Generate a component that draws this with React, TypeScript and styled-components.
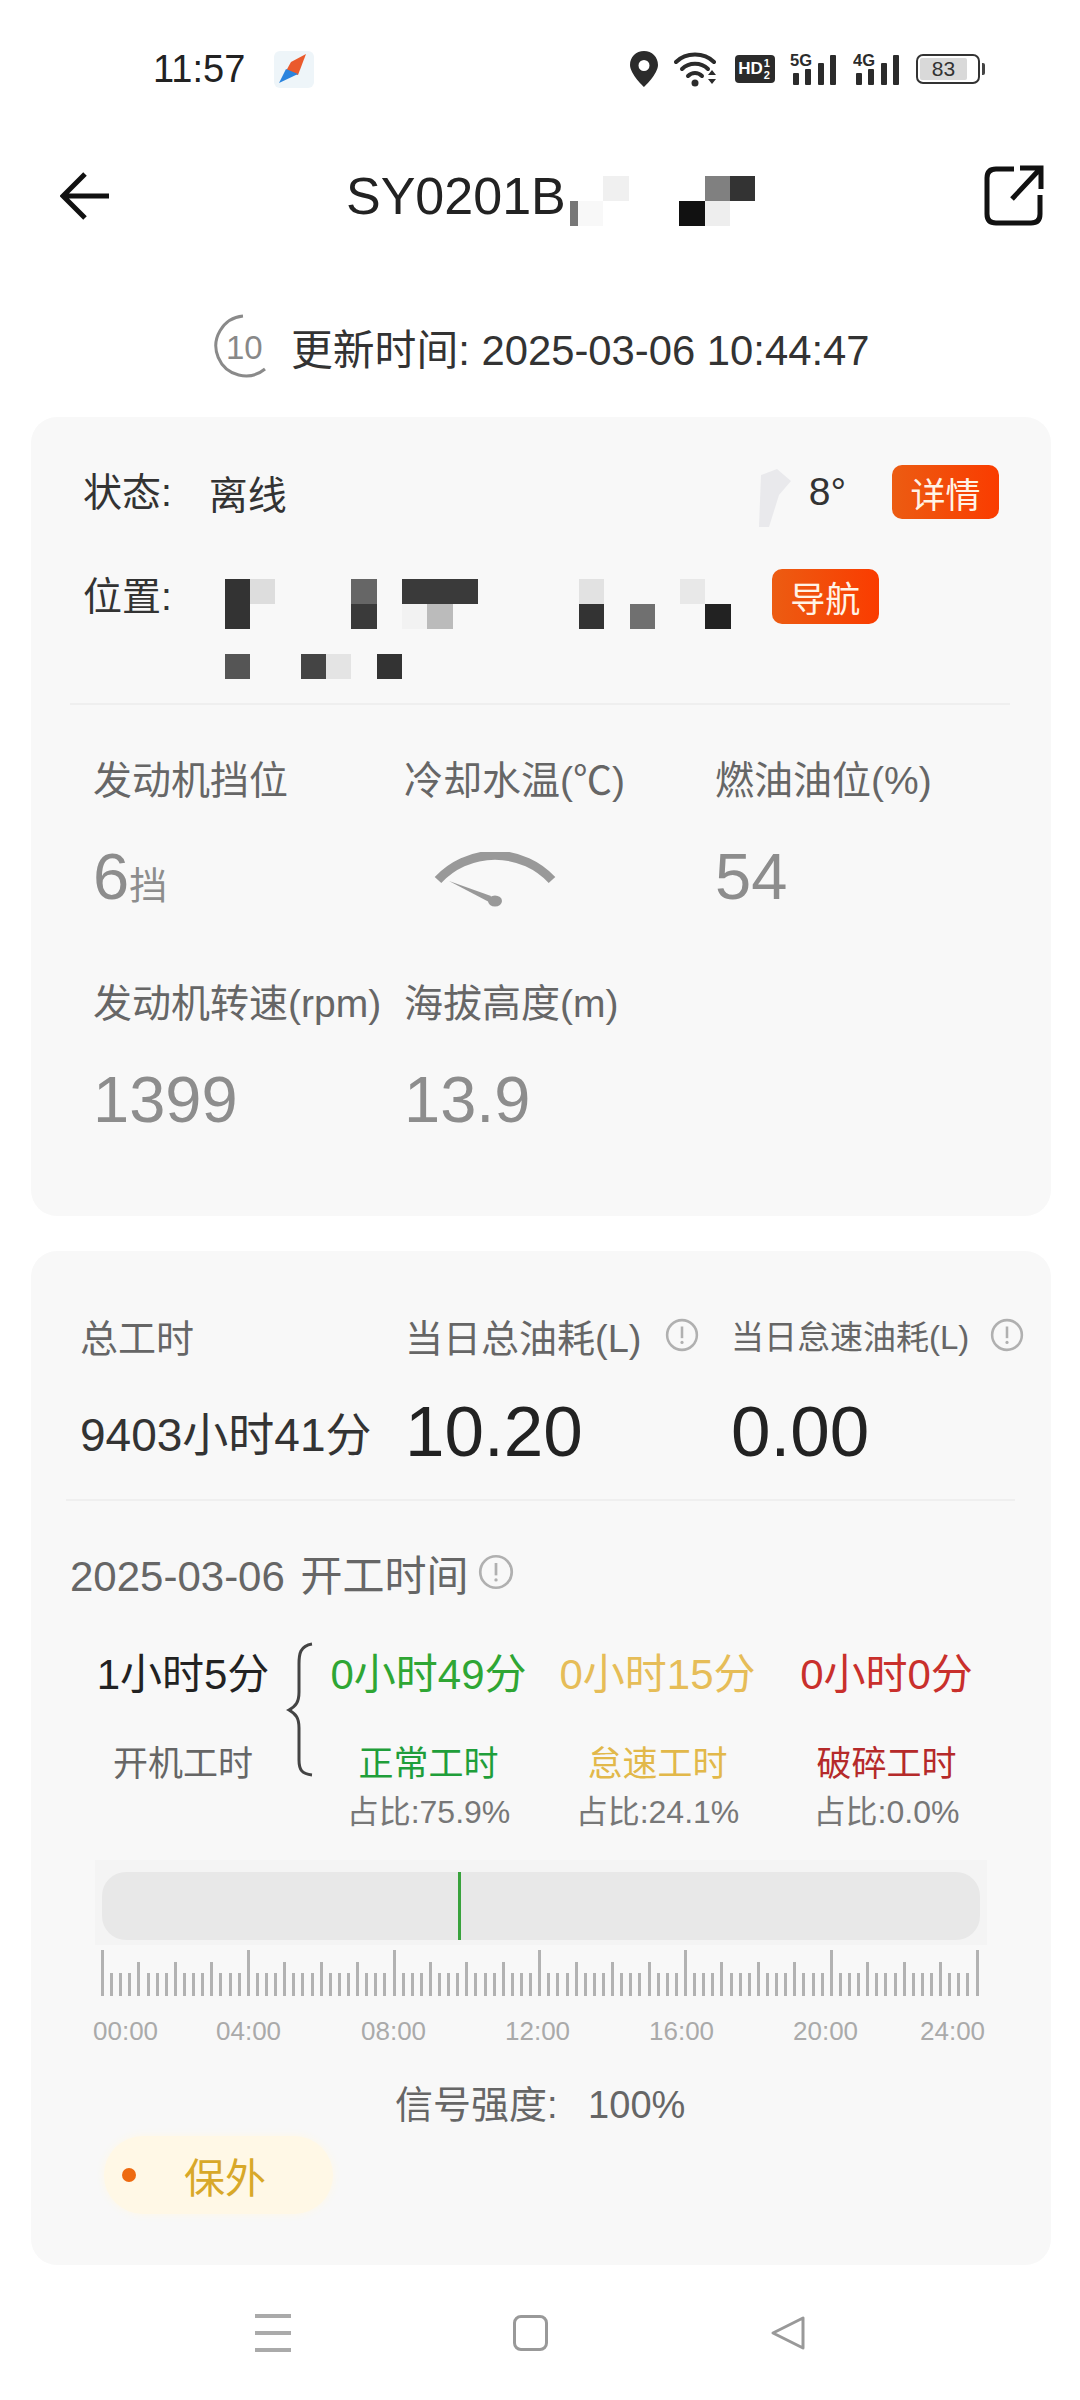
import React from 'react';
import styled, { createGlobalStyle } from 'styled-components';

const GlobalStyle = createGlobalStyle`
  html, body {
    margin: 0;
    padding: 0;
    background: #fff;
  }
  body {
    font-family: "Liberation Sans", "Noto Sans CJK SC", sans-serif;
    color: #333;
  }
`;

type CellData = [number, number, string];

const TITLE_CELLS: CellData[] = [
  [1, 2, '#777'],
  [2, 2, '#f8f8f8'],
  [3, 1, '#f0f0f0'],
  [7, 1, '#808080'],
  [8, 1, '#333'],
  [6, 2, '#111'],
  [7, 2, '#eee'],
];

const ADDRESS_CELLS: CellData[] = [
  [1, 1, '#333'],
  [2, 1, '#ddd'],
  [6, 1, '#666'],
  [8, 1, '#3a3a3a'],
  [9, 1, '#3a3a3a'],
  [10, 1, '#3a3a3a'],
  [15, 1, '#e2e2e2'],
  [19, 1, '#e8e8e8'],
  [1, 2, '#333'],
  [6, 2, '#3a3a3a'],
  [8, 2, '#f2f2f2'],
  [9, 2, '#bbb'],
  [15, 2, '#333'],
  [17, 2, '#707070'],
  [20, 2, '#222'],
  [1, 4, '#555'],
  [4, 4, '#444'],
  [5, 4, '#e4e4e4'],
  [7, 4, '#333'],
];

const TICKS = Array.from({ length: 97 }, (_, i) => i);
const HOURS = ['00:00', '04:00', '08:00', '12:00', '16:00', '20:00', '24:00'];

const STATS = [
  { value: '0小时49分', name: '正常工时', share: '占比:75.9%', color: '#2fa634', nameColor: '#1f9e3a' },
  { value: '0小时15分', name: '怠速工时', share: '占比:24.1%', color: '#e6bd58', nameColor: '#e2b84a' },
  { value: '0小时0分', name: '破碎工时', share: '占比:0.0%', color: '#c9302c', nameColor: '#b52a2a' },
];

const SignalIcon = ({ label }: { label: string }) => (
  <svg width="48" height="34" viewBox="0 0 48 34">
    <text x="0" y="14" fontSize="17" fontWeight="700" fill="#2b2b2b" fontFamily="Liberation Sans" textLength="22" lengthAdjust="spacingAndGlyphs">
      {label}
    </text>
    <rect x="3" y="21" width="6" height="12" rx="1" fill="#2b2b2b" />
    <rect x="15" y="17" width="6" height="16" rx="1" fill="#2b2b2b" />
    <rect x="28" y="11" width="6" height="22" rx="1" fill="#2b2b2b" />
    <rect x="40" y="3" width="6" height="30" rx="1" fill="#2b2b2b" />
  </svg>
);

const InfoIcon = ({ size }: { size: number }) => (
  <svg width={size} height={size} viewBox="0 0 32 32">
    <circle cx="16" cy="16" r="14" fill="none" stroke="#b0b0b0" strokeWidth="2.4" />
    <path d="M16 8v11" stroke="#b0b0b0" strokeWidth="2.4" />
    <circle cx="16" cy="23" r="1.5" fill="#b0b0b0" />
  </svg>
);

const App = () => {
  return (
    <Page>
      <GlobalStyle />
      <StatusBar>
        <Clock>11:57</Clock>
        <AppBadge viewBox="0 0 40 37" width="40" height="37">
          <rect x="0" y="0" width="40" height="37" rx="6" fill="#eef5f9" />
          <path d="M32 3 L17 11 L12 20 L24 24 Z" fill="#ea5a2c" />
          <path d="M5 32 L12 18 L24 23 Z" fill="#2a84de" />
        </AppBadge>
        <StatusIcons>
          <svg width="30" height="36" viewBox="0 0 30 36">
            <path fillRule="evenodd" d="M15 0C7 0 1 6 1 14c0 9 14 22 14 22s14-13 14-22C29 6 23 0 15 0Zm0 9a5.500 5.500 0 1 1 0 11 5.500 5.500 0 0 1 0-11Z" fill="#2b2b2b" />
          </svg>
          <svg width="46" height="36" viewBox="0 0 46 36">
            <g fill="none" stroke="#2b2b2b" strokeWidth="4" strokeLinecap="round">
              <path d="M2 11C12 1 30 1 40 11" />
              <path d="M8 18C15 11 27 11 34 18" />
              <path d="M14 25C18 21 24 21 28 25" />
            </g>
            <circle cx="21" cy="32" r="3.500" fill="#2b2b2b" />
            <path d="M34 24l4-5 4 5ZM34 28h8l-4 5Z" fill="#2b2b2b" />
          </svg>
          <HdBadge>
            HD
            <HdFraction>
              <span>1</span>
              <span>2</span>
            </HdFraction>
          </HdBadge>
          <SignalIcon label="5G" />
          <SignalIcon label="4G" />
          <Battery>
            <BatteryLevel>83</BatteryLevel>
          </Battery>
          <BatteryTip />
        </StatusIcons>
      </StatusBar>

      <Header>
        <BackIcon width="50" height="48" viewBox="0 0 50 48">
          <path d="M25 2 L3 24 L25 46 M3 24 H49" fill="none" stroke="#111" strokeWidth="5" />
        </BackIcon>
        <Title>SY0201B</Title>
        <TitleMosaic>
          {TITLE_CELLS.map(([col, row, color]) => (
            <MosaicCell key={`${col}-${row}`} $col={col} $row={row} $color={color} />
          ))}
        </TitleMosaic>
        <ShareIcon width="60" height="62" viewBox="0 0 60 62">
          <path d="M30 4 H12 Q3 4 3 13 V49 Q3 58 12 58 H47 Q56 58 56 49 V30" fill="none" stroke="#111" strokeWidth="5" />
          <path d="M28 34 L55 5 M36 3 H57 V24" fill="none" stroke="#111" strokeWidth="5" />
        </ShareIcon>
      </Header>

      <UpdateRow>
        <svg width="56" height="66" viewBox="0 0 56 66">
          <path d="M32 2 A30 30 0 1 0 54 55" fill="none" stroke="#8a8a8a" strokeWidth="3" />
          <text x="15" y="45" fontSize="33" fill="#888" fontFamily="Liberation Sans">10</text>
        </svg>
        <UpdateText>更新时间: 2025-03-06 10:44:47</UpdateText>
      </UpdateRow>

      <StatusCard>
        <StateRow>
          <RowLabel>状态:</RowLabel>
          <RowValue>离线</RowValue>
          <WeatherIcon width="34" height="60" viewBox="0 0 34 60">
            <path d="M4 8 L20 2 L34 14 L22 28 L12 60 L2 60 Z" fill="#e9e9ec" />
          </WeatherIcon>
          <Temperature>8°</Temperature>
          <ActionButton>详情</ActionButton>
        </StateRow>
        <AddressRow>
          <RowLabel>位置:</RowLabel>
          <AddressMosaic>
            {ADDRESS_CELLS.map(([col, row, color]) => (
              <MosaicCell key={`${col}-${row}`} $col={col} $row={row} $color={color} />
            ))}
          </AddressMosaic>
          <NavButton>导航</NavButton>
        </AddressRow>
        <StatusDivider />
        <MetricGrid>
          <Metric>
            <MetricLabel>发动机挡位</MetricLabel>
            <MetricValue>
              6<MetricUnit>挡</MetricUnit>
            </MetricValue>
          </Metric>
          <Metric>
            <MetricLabel>冷却水温(℃)</MetricLabel>
            <GaugeIcon width="124" height="60" viewBox="0 0 124 60">
              <path d="M5 28 A78 78 0 0 1 119 28" fill="none" stroke="#999" strokeWidth="9" />
              <path d="M16 29 L58 44 L56 50 Z" fill="#999" />
              <ellipse cx="62" cy="49" rx="7" ry="5.500" fill="#999" />
            </GaugeIcon>
          </Metric>
          <Metric>
            <MetricLabel>燃油油位(%)</MetricLabel>
            <MetricValue>54</MetricValue>
          </Metric>
          <Metric>
            <MetricLabel>发动机转速(rpm)</MetricLabel>
            <MetricValue>1399</MetricValue>
          </Metric>
          <Metric>
            <MetricLabel>海拔高度(m)</MetricLabel>
            <MetricValue>13.9</MetricValue>
          </Metric>
        </MetricGrid>
      </StatusCard>

      <WorkCard>
        <TotalsGrid>
          <TotalLabel>总工时</TotalLabel>
          <TotalLabel>
            当日总油耗(L)
            <InfoIcon size={34} />
          </TotalLabel>
          <TotalLabel $small>
            当日怠速油耗(L)
            <InfoIcon size={34} />
          </TotalLabel>
          <TotalHours>9403小时41分</TotalHours>
          <TotalValue>10.20</TotalValue>
          <TotalValue>0.00</TotalValue>
        </TotalsGrid>
        <WorkDivider />
        <DateRow>
          2025-03-06 开工时间
          <InfoIcon size={36} />
        </DateRow>
        <Breakdown>
          <StatColumn>
            <StatValue $color="#222">1小时5分</StatValue>
            <StatName $color="#666">开机工时</StatName>
          </StatColumn>
          <BraceIcon width="28" height="136" viewBox="0 0 28 136">
            <path d="M26 2 C14 4 13 12 13 22 V50 C13 60 10 64 3 68 C10 72 13 76 13 86 V118 C13 128 16 132 26 133" fill="none" stroke="#444" strokeWidth="3" />
          </BraceIcon>
          {STATS.map((stat) => (
            <StatColumn key={stat.name}>
              <StatValue $color={stat.color}>{stat.value}</StatValue>
              <StatName $color={stat.nameColor}>{stat.name}</StatName>
              <StatShare>{stat.share}</StatShare>
            </StatColumn>
          ))}
        </Breakdown>
        <TrackFrame>
          <Track>
            <TrackMark />
          </Track>
        </TrackFrame>
        <Ruler>
          {TICKS.map((i) => (
            <Tick key={i} $height={i % 16 === 0 ? 46 : i % 4 === 0 ? 34 : 23} />
          ))}
        </Ruler>
        <HourRow>
          {HOURS.map((hour) => (
            <span key={hour}>{hour}</span>
          ))}
        </HourRow>
        <SignalText>信号强度: 100%</SignalText>
        <WarrantyPill>
          <WarrantyDot />
          保外
        </WarrantyPill>
      </WorkCard>

      <NavBar>
        <MenuLines>
          <span />
          <span />
          <span />
        </MenuLines>
        <HomeSquare />
        <svg width="36" height="36" viewBox="0 0 36 36">
          <path d="M33 3 V33 L3 18 Z" fill="none" stroke="#999" strokeWidth="3" strokeLinejoin="round" />
        </svg>
      </NavBar>
    </Page>
  );
};

export default App;

const Page = styled.div`
  width: 1080px;
  height: 2400px;
  overflow: hidden;
  background: #fff;
`;

const StatusBar = styled.div`
  display: flex;
  align-items: center;
  height: 138px;
  padding-left: 153px;
`;

const Clock = styled.div`
  font-size: 38px;
  color: #222;
`;

const AppBadge = styled.svg`
  margin-left: 29px;
`;

const StatusIcons = styled.div`
  display: flex;
  align-items: center;
  margin-left: 315px;
  gap: 15px;
`;

const HdBadge = styled.div`
  display: flex;
  align-items: center;
  gap: 1px;
  width: 40px;
  height: 28px;
  background: #2b2b2b;
  border-radius: 4px;
  color: #fff;
  font-size: 17px;
  font-weight: 700;
  padding-left: 3px;
  box-sizing: border-box;
  overflow: hidden;
`;

const HdFraction = styled.div`
  display: flex;
  flex-direction: column;
  font-size: 11px;
  line-height: 12px;
`;

const Battery = styled.div`
  display: flex;
  width: 64px;
  height: 30px;
  box-sizing: border-box;
  border: 2.5px solid #333;
  border-radius: 7px;
  padding: 2px;
`;

const BatteryLevel = styled.div`
  width: 83%;
  background: #d9d9d9;
  border-radius: 2px;
  color: #333;
  font-size: 21px;
  line-height: 22px;
  text-align: center;
`;

const BatteryTip = styled.div`
  width: 3px;
  height: 12px;
  margin-left: -13px;
  background: #444;
  border-radius: 0 2px 2px 0;
`;

const Header = styled.div`
  display: flex;
  align-items: center;
  height: 116px;
  padding-left: 60px;
`;

const BackIcon = styled.svg`
  margin-right: 236px;
`;

const Title = styled.div`
  font-size: 52px;
  color: #222;
`;

const Mosaic = styled.div`
  display: grid;
  grid-auto-rows: 25px;
`;

const TitleMosaic = styled(Mosaic)`
  grid-template-columns: 8px repeat(7, 25.4px);
  margin: 10px 0 0 4px;
`;

const AddressMosaic = styled(Mosaic)`
  grid-template-columns: repeat(20, 25.3px);
  width: 506px;
  margin: 10px 0 0 53px;
  flex: none;
`;

const MosaicCell = styled.div<{ $col: number; $row: number; $color: string }>`
  grid-column: ${(p) => p.$col};
  grid-row: ${(p) => p.$row};
  background: ${(p) => p.$color};
`;

const ShareIcon = styled.svg`
  margin-left: auto;
  margin-right: 36px;
`;

const UpdateRow = styled.div`
  display: flex;
  align-items: center;
  gap: 24px;
  height: 62px;
  margin-top: 62px;
  padding-left: 211px;
`;

const UpdateText = styled.div`
  font-size: 41.8px;
  color: #333;
`;

const Card = styled.div`
  box-sizing: border-box;
  width: 1020px;
  margin-left: 31px;
  background: #f8f8f8;
  border-radius: 26px;
`;

const StatusCard = styled(Card)`
  height: 799px;
  margin-top: 39px;
  padding-top: 48px;
`;

const StateRow = styled.div`
  display: flex;
  align-items: center;
  height: 54px;
  padding: 0 52px;
`;

const RowLabel = styled.div`
  font-size: 39px;
  line-height: 55px;
  color: #333;
  flex: none;
`;

const RowValue = styled.div`
  font-size: 39px;
  margin-left: 37px;
  color: #333;
`;

const WeatherIcon = styled.svg`
  margin-left: auto;
  margin-top: 10px;
`;

const Temperature = styled.div`
  font-size: 39px;
  margin: 0 46px 0 18px;
  color: #333;
`;

const ActionButton = styled.div`
  display: flex;
  align-items: center;
  justify-content: center;
  width: 107px;
  height: 54px;
  border-radius: 10px;
  background: linear-gradient(90deg, #ec5c12, #fa3c00);
  color: #fff3e6;
  font-size: 35px;
  flex: none;
`;

const AddressRow = styled.div`
  display: flex;
  align-items: flex-start;
  height: 134px;
  margin-top: 50px;
  padding-left: 52px;
`;

const NavButton = styled(ActionButton)`
  height: 55px;
  margin-left: 41px;
`;

const StatusDivider = styled.div`
  height: 2px;
  margin: 0 41px 0 39px;
  background: #efefef;
`;

const MetricGrid = styled.div`
  display: grid;
  grid-template-columns: 311px 311px 1fr;
  grid-auto-rows: 223px;
  padding: 52px 0 0 62px;
`;

const Metric = styled.div`
  display: flex;
  flex-direction: column;
`;

const MetricLabel = styled.div`
  font-size: 39px;
  line-height: 48px;
  color: #666;
  white-space: nowrap;
`;

const MetricValue = styled.div`
  height: 80px;
  margin-top: 32px;
  font-size: 65px;
  line-height: 80px;
  color: #8d8d8d;
`;

const MetricUnit = styled.span`
  font-size: 38px;
`;

const GaugeIcon = styled.svg`
  margin: 47px 0 0 29px;
`;

const WorkCard = styled(Card)`
  height: 1014px;
  margin-top: 35px;
  padding-top: 60px;
`;

const TotalsGrid = styled.div`
  display: grid;
  grid-template-columns: 325px 326px 1fr;
  grid-template-rows: 48px 80px;
  row-gap: 36px;
  padding-left: 49px;
`;

const TotalLabel = styled.div<{ $small?: boolean }>`
  display: flex;
  align-items: center;
  gap: ${(p) => (p.$small ? '21px' : '24px')};
  font-size: ${(p) => (p.$small ? '33px' : '38px')};
  color: #666;
  white-space: nowrap;
`;

const TotalHours = styled.div`
  font-size: 46px;
  line-height: 80px;
  color: #333;
  white-space: nowrap;
`;

const TotalValue = styled.div`
  font-size: 71px;
  line-height: 74px;
  color: #222;
`;

const WorkDivider = styled.div`
  height: 2px;
  margin: 24px 36px 0 35px;
  background: #efefef;
`;

const DateRow = styled.div`
  display: flex;
  align-items: center;
  gap: 9px;
  height: 50px;
  margin-top: 46px;
  padding-left: 39px;
  font-size: 42px;
  word-spacing: 4px;
  color: #666;
`;

const Breakdown = styled.div`
  display: grid;
  grid-template-columns: 190px 36px repeat(3, 229px);
  margin-top: 46px;
  padding-left: 57px;
  height: 185px;
`;

const BraceIcon = styled.svg`
  justify-self: end;
  margin-top: -1px;
`;

const StatColumn = styled.div`
  display: flex;
  flex-direction: column;
  align-items: center;
  white-space: nowrap;
`;

const StatValue = styled.div<{ $color: string }>`
  font-size: 42px;
  line-height: 64px;
  color: ${(p) => p.$color};
`;

const StatName = styled.div<{ $color: string }>`
  margin-top: 35px;
  font-size: 35px;
  line-height: 44px;
  color: ${(p) => p.$color};
`;

const StatShare = styled.div`
  margin-top: 8px;
  font-size: 32px;
  line-height: 36px;
  color: #777;
`;

const TrackFrame = styled.div`
  box-sizing: border-box;
  width: 892px;
  height: 85px;
  margin: 32px 0 0 64px;
  padding: 12px 7px 5px;
  background: #f4f4f4;
`;

const Track = styled.div`
  position: relative;
  height: 68px;
  border-radius: 24px;
  background: #e8e8e8;
`;

const TrackMark = styled.div`
  position: absolute;
  left: 356px;
  top: 0;
  bottom: 0;
  width: 3px;
  background: #38a23c;
`;

const Ruler = styled.div`
  display: flex;
  align-items: flex-end;
  justify-content: space-between;
  width: 878px;
  height: 46px;
  margin: 5px 0 0 70px;
`;

const Tick = styled.div<{ $height: number }>`
  width: 3px;
  height: ${(p) => p.$height}px;
  background: #b2b2b2;
`;

const HourRow = styled.div`
  display: grid;
  grid-template-columns: 123px 145px 144px 144px 144px 127px auto;
  margin: 20px 0 0 62px;
  font-size: 26px;
  line-height: 30px;
  color: #aaa;
`;

const SignalText = styled.div`
  height: 44px;
  margin-top: 37px;
  padding-left: 364px;
  font-size: 38px;
  line-height: 44px;
  word-spacing: 20px;
  color: #666;
`;

const WarrantyPill = styled.div`
  display: flex;
  align-items: center;
  box-sizing: border-box;
  width: 229px;
  height: 78px;
  margin: 9px 0 0 73px;
  padding-left: 18px;
  border-radius: 39px;
  background: #fff8e6;
  box-shadow: 0 0 8px #fff8e6;
  color: #d8a829;
  font-size: 41px;
`;

const WarrantyDot = styled.div`
  width: 14px;
  height: 14px;
  margin-right: 48px;
  border-radius: 50%;
  background: #ee6a10;
`;

const NavBar = styled.div`
  display: flex;
  align-items: center;
  height: 135px;
  padding-left: 255px;
`;

const MenuLines = styled.div`
  display: flex;
  flex-direction: column;
  gap: 13px;
  width: 36px;
  margin-right: 222px;

  span {
    height: 4px;
    background: #aaa;
  }
`;

const HomeSquare = styled.div`
  box-sizing: border-box;
  width: 35px;
  height: 36px;
  margin-right: 222px;
  border: 3px solid #999;
  border-radius: 8px;
`;
